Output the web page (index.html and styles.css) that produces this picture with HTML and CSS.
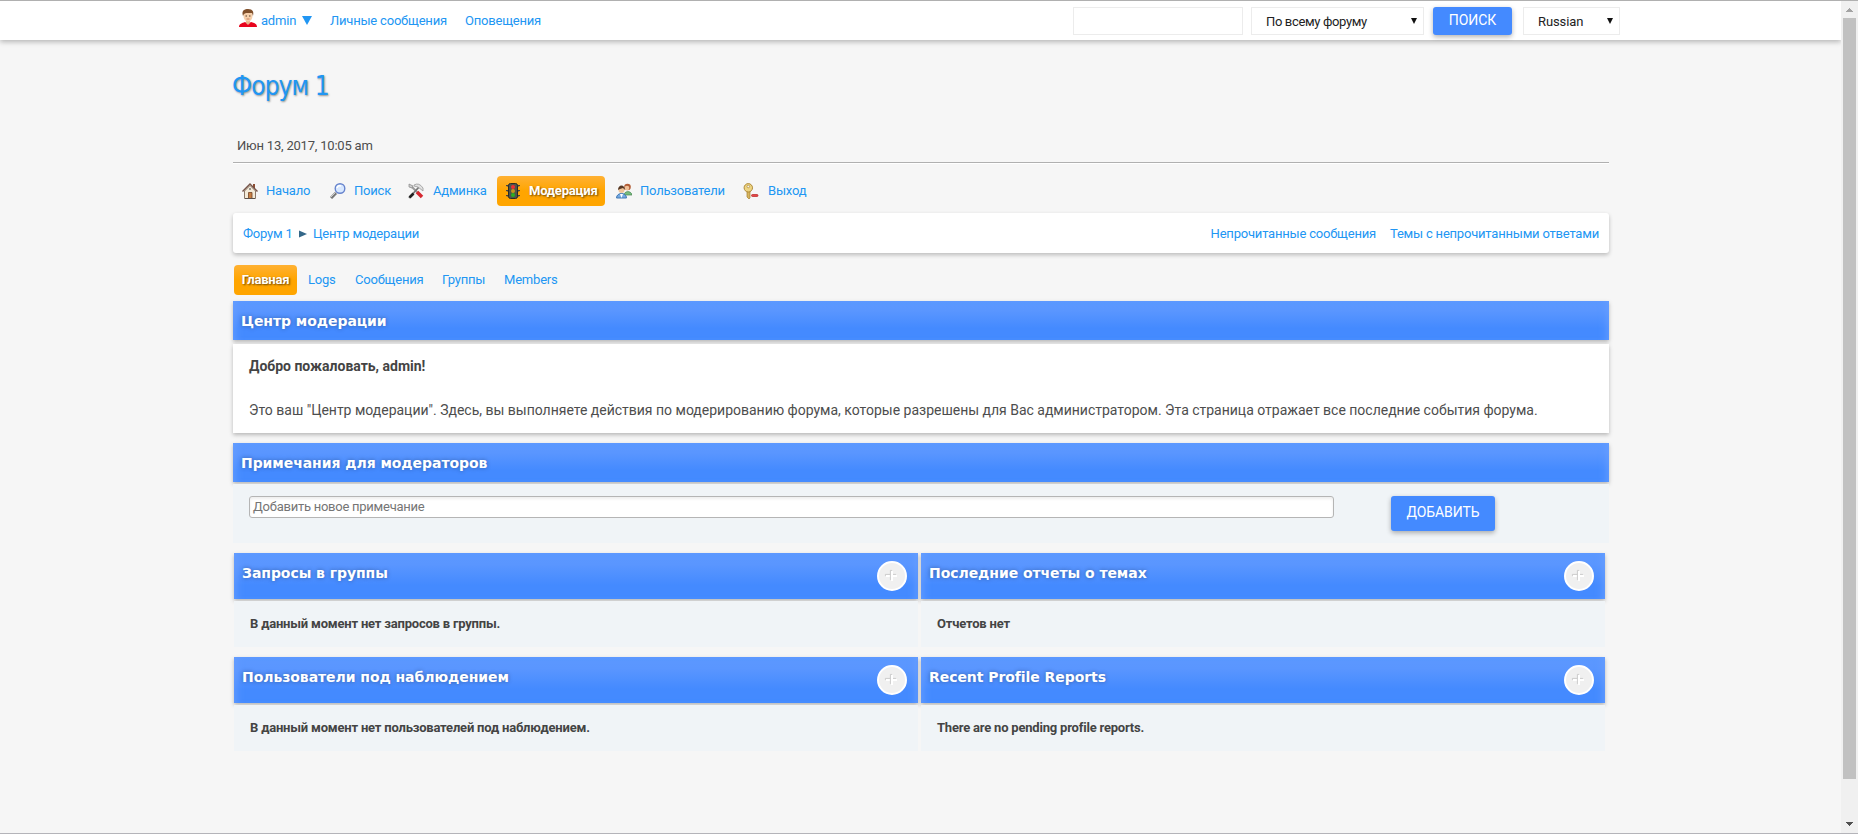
FILE: index.html
```
<!DOCTYPE html>
<html lang="ru">
<head>
<meta charset="utf-8">
<title>Центр модерации</title>
<link rel="stylesheet" href="styles.css">
</head>
<body>
<div class="page">
<div class="main">
  <header class="topbar">
    <div class="wrap topbar-in">
      <svg class="avatar" width="18" height="18" viewBox="0 0 18 18"><path d="M0 18c0-3 3-4 6-5l3 2 3-2c4 1 6 2 6 5z" fill="#e8051e"/><path d="M7 10h4v4l-2 2-2-2z" fill="#e9b58c"/><ellipse cx="9" cy="7" rx="4.5" ry="5.5" fill="#f6cfaa"/><path d="M4 7C2 1 6 0 9 0c5 0 6 3 5 7l-1-3H7L5 5z" fill="#80502b"/><path d="M6.5 7h1.5M10 7h1.5" stroke="#57402f"/><path d="M7.5 10h3" stroke="#c98060"/></svg>
      <a class="t-admin"><span>admin</span><svg width="10" height="9" viewBox="0 0 10 9"><path d="M0 0h10L5 9z" fill="#2196f3"/></svg></a>
      <a class="t-pm">Личные сообщения</a>
      <a class="t-alerts">Оповещения</a>
      <form class="search">
        <span class="field f-query"></span>
        <span class="field f-scope"><span>По всему форуму</span><svg width="6" height="6" viewBox="0 0 6 6"><path d="M0 0h6L3 6z" fill="#111"/></svg></span>
        <span class="btn b-search">ПОИСК</span>
        <span class="field f-lang"><span>Russian</span><svg width="6" height="6" viewBox="0 0 6 6"><path d="M0 0h6L3 6z" fill="#111"/></svg></span>
      </form>
    </div>
  </header>
  <div class="wrap">
    <h1 class="title">Форум 1</h1>
    <div class="date">Июн 13, 2017, 10:05 am</div>
    <nav class="menu">
      <a class="m1"><svg width="16" height="16" viewBox="0 0 16 16"><path d="M11 1h2v4h-2z" fill="#8b4c32"/><path d="M2.5 8v7.5h11V8L8 2.5z" fill="#f3ead8" stroke="#8b7767"/><path d="M.5 8.5L8 1l7.500 7.500" fill="none" stroke="#765448" stroke-width="1.400"/><path d="M6.500 9.500h3.500v6H6.500z" fill="#c87f43" stroke="#704326" stroke-width=".8"/><path d="M3 15.500h10" stroke="#5c5148"/><circle cx="8" cy="6" r="1" fill="#777"/></svg>Начало</a>
      <a class="m2"><svg width="16" height="16" viewBox="0 0 16 16"><path d="M1 15l5-5" stroke="#777" stroke-width="3"/><path d="M1 14l4-4" stroke="#ccc"/><circle cx="10" cy="5.500" r="4.800" fill="#d8e8ff" stroke="#6784cd" stroke-width="1.400"/><path d="M7 5q1-3 4-2" stroke="#fff" fill="none" stroke-width="1.500"/></svg>Поиск</a>
      <a class="m3"><svg width="16" height="16" viewBox="0 0 16 16"><path d="M3 3l7 7" stroke="#999" stroke-width="2"/><path d="M9 9l5 5" stroke="#d52830" stroke-width="3.500"/><path d="M1 15L11 4" stroke="#777" stroke-width="1.800"/><path d="M1.500 14.500l4-4" stroke="#222" stroke-width="2.600"/><path d="M6 2q5-3 9 3v3l-5-4-4-1z" fill="#e2e2e2" stroke="#999" stroke-width=".8"/><path d="M1 1v3l3 1 1-2z" fill="#ccc" stroke="#888" stroke-width=".7"/></svg>Админка</a>
      <a class="m4 active"><svg width="14" height="16" viewBox="0 0 14 16"><path d="M0 2h3v2L0 3zm11 0h3v1l-3 1zM0 7h3v2L0 8zm11 0h3v1l-3 1zM0 12h3v2l-3-1zm11 0h3v1l-3 1z" fill="#444"/><rect x="2.500" y=".5" width="9" height="15" rx="2" fill="#50544b" stroke="#292b25"/><circle cx="7" cy="4" r="2" fill="#ed3030"/><circle cx="7" cy="8" r="2" fill="#c7941c"/><circle cx="7" cy="12" r="2" fill="#2dad22"/></svg>Модерация</a>
      <a class="m5"><svg width="16" height="16" viewBox="0 0 16 16"><path d="M8 12c0-4 7-5 8 0z" fill="#77bd80" stroke="#45834c" stroke-width=".7"/><circle cx="11.500" cy="4" r="3.300" fill="#b25c35"/><circle cx="11" cy="5" r="2.300" fill="#f0c097"/><path d="M.5 15c0-6 10-6 10 0z" fill="#74a9e1" stroke="#4279b5"/><path d="M4 11h3l-1.500 4z" fill="#fff"/><circle cx="5.500" cy="7" r="3" fill="#eec49a"/><path d="M2 7c0-6 7-6 7 0L7 5 4 6z" fill="#563824"/></svg>Пользователи</a>
      <a class="m6"><svg width="16" height="16" viewBox="0 0 16 16"><path d="M4 8h3v7l-1 1-2-2z" fill="#d6b561" stroke="#a6802d" stroke-width=".7"/><circle cx="5.300" cy="4.800" r="4.200" fill="#eed582" stroke="#af8938"/><circle cx="5.300" cy="3.500" r="1.300" fill="#f5f5f5" stroke="#af8938" stroke-width=".7"/><rect x="8.500" y="11.500" width="6.500" height="2" rx="1" fill="#e34646" stroke="#b92323" stroke-width=".7"/></svg>Выход</a>
    </nav>
    <div class="crumbs">
      <a class="c1">Форум 1</a><svg class="c-arrow" width="8" height="8" viewBox="0 0 8 8"><path d="M0 0.500L8 4 0 7.500z" fill="#346789"/></svg><a class="c2">Центр модерации</a>
      <span class="unread"><a>Непрочитанные сообщения</a><a>Темы с непрочитанными ответами</a></span>
    </div>
    <nav class="tabs">
      <a class="s1 active">Главная</a><a class="s2">Logs</a><a class="s3">Сообщения</a><a class="s4">Группы</a><a class="s5">Members</a>
    </nav>
    <div class="bar"><h3>Центр модерации</h3></div>
    <section class="welcome">
      <p class="hello">Добро пожаловать, admin!</p>
      <p class="intro">Это ваш "Центр модерации". Здесь, вы выполняете действия по модерированию форума, которые разрешены для Вас администратором. Эта страница отражает все последние события форума.</p>
    </section>
    <div class="bar"><h3>Примечания для модераторов</h3></div>
    <section class="notes">
      <span class="note-input">Добавить новое примечание</span>
      <span class="btn b-add">ДОБАВИТЬ</span>
    </section>
    <div class="grid">
      <section><div class="bar tall"><h3>Запросы в группы</h3><i class="plus"></i></div><p class="cell">В данный момент нет запросов в группы.</p></section>
      <section><div class="bar tall"><h3>Последние отчеты о темах</h3><i class="plus"></i></div><p class="cell">Отчетов нет</p></section>
      <section><div class="bar tall"><h3>Пользователи под наблюдением</h3><i class="plus"></i></div><p class="cell">В данный момент нет пользователей под наблюдением.</p></section>
      <section><div class="bar tall"><h3>Recent Profile Reports</h3><i class="plus"></i></div><p class="cell">There are no pending profile reports.</p></section>
    </div>
  </div>
</div>
<div class="scroll">
  <svg width="7" height="4" viewBox="0 0 7 4"><path d="M3 0h1v1h1v1h1v1h1v1H0V3h1V2h1V1h1z" fill="#a3a3a3"/></svg>
  <div class="thumb"></div>
  <svg width="7" height="4" viewBox="0 0 7 4"><path d="M0 0h7v1H6v1H5v1H4v1H3V3H2V2H1V1H0z" fill="#505050"/></svg>
</div>
</div>
</body>
</html>
```
FILE: styles.css
```
* { box-sizing: border-box; }
body { margin: 0; font: 13px/16px Roboto, sans-serif; letter-spacing: -.2px; color: #4d4d4d; background: #f6f6f6; }
h1, h3, p, form { margin: 0; }
a { color: #2196f3; white-space: nowrap; }
svg { display: block; flex: none; }
.page { display: flex; height: 834px; overflow: hidden; border-top: 1px solid #b0b0b0; border-bottom: 1px solid #b4b4b9; }
.main { width: 1841px; flex: none; }
.wrap { width: 1376px; margin-left: 233px; }

.topbar { height: 39px; background: #fff; box-shadow: 0 2px 5px rgba(0,0,0,.26); }
.topbar-in { display: flex; height: 39px; }
.topbar-in > * { flex: none; }
.avatar { margin: 8px 0 0 6px; }
.t-admin { display: flex; width: 69px; margin: 12px 0 0 4px; gap: 6px; }
.t-admin svg { margin-top: 3px; }
.t-pm { width: 135px; margin-top: 12px; }
.t-alerts { margin-top: 12px; width: 608px; }
.search { display: flex; padding-top: 6px; }
.field { height: 28px; border: 1px solid #ececec; background: #fff; color: #222; display: flex; align-items: center; justify-content: space-between; padding: 2px 6px 0 14px; white-space: nowrap; flex: none; }
.field svg { margin-top: -3px; }
.f-query { width: 170px; margin-right: 8px; }
.f-scope { width: 173px; margin-right: 9px; letter-spacing: -.35px; }
.f-lang { width: 97px; letter-spacing: -.1px; }
.btn { background: #448aff; color: #fff; border-radius: 3px; text-align: center; flex: none; box-shadow: 0 2px 5px rgba(0,0,0,.3); white-space: nowrap; }
.b-search { width: 79px; height: 28px; line-height: 27px; font-size: 14px; margin-right: 11px; letter-spacing: 0; }

.title { height: 70px; padding-top: 30px; font: 26px/32px "DejaVu Sans", sans-serif; font-stretch: condensed; color: #2196f3; text-shadow: 1px 1px 2px rgba(0,0,0,.4); letter-spacing: -.9px; text-indent: -1px; }
.date { height: 53px; padding: 28px 0 0 4px; border-bottom: 1px solid #b0b0b0; box-shadow: 0 1px 0 #fff; }
.menu { display: flex; height: 50px; padding: 13px 0 0 1px; }
.menu a { height: 30px; display: flex; align-items: center; gap: 8px; padding-left: 8px; }
.m1 { width: 88px; } .m2 { width: 78px; } .m3 { width: 97px; }
.menu .m4 { width: 108px; } .m5 { width: 127px; margin-left: 3px; }
.menu .m3 { gap: 9px; }
.menu .m4 { gap: 9px; padding-left: 9px; }
.menu .m6 { gap: 9px; }
a.active { background: linear-gradient(#ffb133, #ffa500 50%); border-radius: 4px; color: #fff; font-weight: 700; text-shadow: 1px 1px 2px rgba(0,0,0,.6); }
.crumbs { display: flex; align-items: center; height: 40px; padding: 2px 10px 0; background: #fff; border-radius: 3px; box-shadow: 0 2px 4px rgba(0,0,0,.24); }
.c1 { width: 56px; } .c-arrow { margin-right: 6px; }
.unread { margin-left: auto; display: flex; gap: 14px; }
.tabs { display: flex; padding: 12px 0 6px 1px; line-height: 30px; }
.s1 { width: 63px; text-align: center; margin-right: 11px; }
.s2 { width: 47px; } .s3 { width: 87px; } .s4 { width: 62px; }

.bar { position: relative; height: 39px; display: flex; justify-content: space-between; padding: 0 12px 0 8px; background: linear-gradient(#5c98ff, #5a96ff 25%, #448aff 70%); box-shadow: 0 2px 4px rgba(0,0,0,.26), inset 8px 0 10px -7px #6aa0ff, inset -8px 0 10px -7px #6aa0ff; }
.bar h3 { font: 700 14px/40px "DejaVu Sans", sans-serif; letter-spacing: -.06px; color: #fff; text-shadow: 0 0 4px rgba(0,0,0,.35); white-space: nowrap; }
.welcome { position: relative; height: 89px; margin: 4px 0 10px; padding: 14px 16px 0; background: #fff; box-shadow: 0 2px 4px rgba(0,0,0,.25); font-size: 14px; letter-spacing: -.008px; }
.hello { font-weight: 700; height: 44px; color: #444; }
.intro { white-space: nowrap; }
.notes { position: relative; display: flex; align-items: flex-start; height: 59px; margin: 2px 0 10px; padding: 12px 16px; background: #f0f4f7; }
.note-input { width: 1085px; height: 22px; border: 1px solid #b5b5b5; border-radius: 3px; background: #fff; color: #757575; padding: 2px 3px; box-shadow: inset 0 2px 3px #eee; letter-spacing: -.25px; }
.b-add { width: 104px; height: 35px; margin-left: 57px; font-size: 14px; line-height: 33px; letter-spacing: -.1px; }
.grid { display: grid; grid-template-columns: 684px 684px; gap: 10px 3px; padding-left: 1px; }
.bar.tall { height: 46px; padding: 0 11px 0 8px; }
.plus { position: relative; width: 30px; height: 30px; margin-top: 8px; border: 2px solid #fff; border-radius: 50%; background: #f0f0f0; }
.plus::before, .plus::after { content: ""; position: absolute; left: 7px; top: 12px; width: 11px; height: 2px; background: #fff; box-shadow: -1px -1px 1px #ccc; }
.plus::after { left: 12px; top: 8px; width: 2px; height: 10px; }
.cell { position: relative; height: 46px; margin-top: 2px; padding: 15px 16px 0; background: #f0f4f7; font-weight: 700; color: #444; }
.scroll { width: 17px; background: #f0f0f0; display: flex; flex-direction: column; align-items: center; justify-content: space-between; padding: 7px 0; }
.thumb { width: 13px; height: 761px; margin: 6px 0 auto; background: #c1c1c1; }
```
